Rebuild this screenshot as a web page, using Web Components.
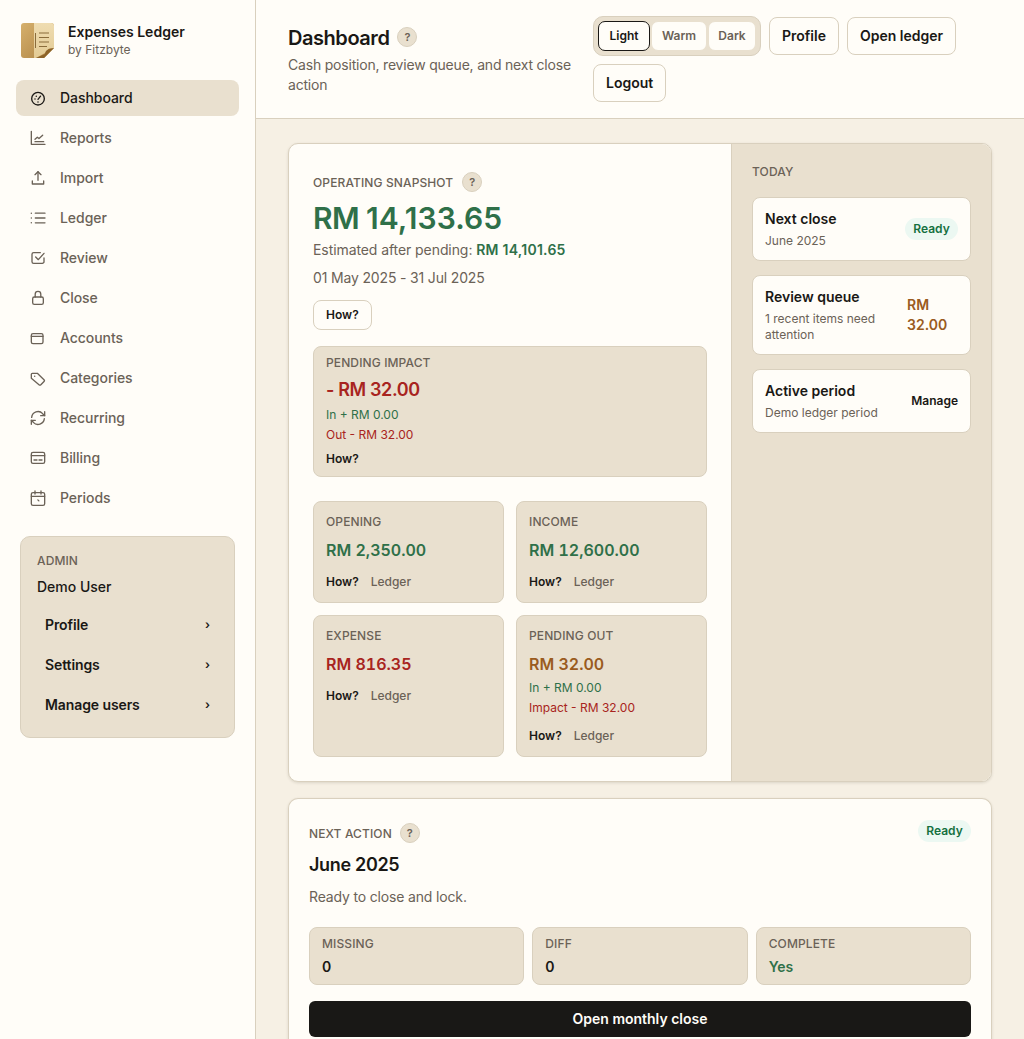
<!doctype html>
<html lang="en"><head><meta charset="utf-8"><title>Expenses Ledger</title>
<style>
html,body{margin:0;height:100%;overflow:hidden;background:#f6f0e4}
body{font-family:Inter,"Liberation Sans",sans-serif;color:#1a1815;font-size:14px}
</style></head>
<body>
<app-shell>
  <side-bar slot="side">
    <nav-item icon="dashboard" active>Dashboard</nav-item>
    <nav-item icon="reports">Reports</nav-item>
    <nav-item icon="import">Import</nav-item>
    <nav-item icon="ledger">Ledger</nav-item>
    <nav-item icon="review">Review</nav-item>
    <nav-item icon="close">Close</nav-item>
    <nav-item icon="accounts">Accounts</nav-item>
    <nav-item icon="categories">Categories</nav-item>
    <nav-item icon="recurring">Recurring</nav-item>
    <nav-item icon="billing">Billing</nav-item>
    <nav-item icon="periods">Periods</nav-item>
    <admin-card slot="footer">
      <admin-link>Profile</admin-link>
      <admin-link>Settings</admin-link>
      <admin-link>Manage users</admin-link>
    </admin-card>
  </side-bar>
  <page-header slot="head"></page-header>
  <snapshot-card></snapshot-card>
  <next-action-card></next-action-card>
</app-shell>
<script>
const BASE = `:host,*{box-sizing:border-box}`;
function def(name, css, html){
  customElements.define(name, class extends HTMLElement{
    constructor(){super();const r=this.attachShadow({mode:'open'});
      r.innerHTML=`<style>${BASE}${css}</style>${typeof html==='function'?html(this):html}`;}
  });
}
const ICONS={
 dashboard:'<circle cx="12" cy="13" r="9.500"/><path d="M12 14l3.800-4.800"/><path d="M7.500 13.400h.01M9.400 9.400h.01M12 18h.01" stroke-width="2.200"/>',
 reports:'<path d="M2 2v19.500h20.500"/><path d="M7.500 14l3.500-3.200 2.500 2 5.500-5"/><path d="M7.500 17.500h13"/>',
 import:'<path d="M12 15.500V2.500"/><path d="M7.500 7L12 2.500 16.500 7"/><path d="M3.500 16.500v4.500h17v-4.500"/>',
 ledger:'<path d="M8 4.750H22.500M8 12H22.500M8 19.250H22.500"/><path d="M2 4.750h.01M2 12h.01M2 19.250h.01" stroke-width="2.200"/>',
 review:'<path d="M15.500 4H5.500A2.500 2.500 0 0 0 3 6.500v11A2.500 2.500 0 0 0 5.500 20h13a2.500 2.500 0 0 0 2.500-2.500V12"/><path d="M8.500 10.500l4 4 8.500-9.500"/>',
 close:'<rect x="4" y="10.500" width="16" height="11" rx="2.500"/><path d="M7.800 10.500V6.200a4.200 4.200 0 0 1 8.400 0v4.300"/>',
 accounts:'<rect x="2" y="5.500" width="17.500" height="15" rx="2.500"/><path d="M2 9.500h17.500"/>',
 categories:'<path d="M2 6.500A1.500 1.500 0 0 1 3.500 5h7.500l10 9.500a2 2 0 0 1 0 2.800l-4.700 4.700a2 2 0 0 1-2.800 0L2 12.500z"/><path d="M7 9.500h.01" stroke-width="2.200"/>',
 recurring:'<path d="M2.500 11A9.500 9.500 0 0 1 19 5.500l3 3"/><path d="M22 2.500v6h-6"/><path d="M21.500 13A9.500 9.500 0 0 1 5 18.500l-3-3"/><path d="M2 21.500v-6h6"/>',
 billing:'<rect x="2" y="3.500" width="20" height="16.500" rx="2.500"/><path d="M2 8.500h20"/><path d="M6 15h4.500M13.500 15H18"/>',
 periods:'<rect x="2" y="4" width="20" height="19" rx="2.500"/><path d="M2 9.500h20M7.500 1.500v4.500M16.500 1.500v4.500"/><path d="M11.800 14.800l1.500 1.500" stroke-width="2"/>'
};
const help=`<help-dot></help-dot>`;
const TAN='#e9e0cf', LINE='#d9d0be', PAPER='#fffdf8', INK='#1a1815', MUTED='#6b6257';

def('app-shell',`:host{display:grid;grid-template-columns:256px 1fr;height:1039px;overflow:hidden;background:#f6f0e4}
 main{min-width:0;display:flex;flex-direction:column;overflow:hidden}
 .content{flex:none;padding:24px 32px;display:flex;flex-direction:column;gap:16px}`,
 `<slot name="side"></slot><main><slot name="head"></slot><div class="content"><slot></slot></div></main>`);

def('brand-mark',`:host{display:block;width:33px;height:35px}svg{display:block}`,
 `<svg width="33" height="35" viewBox="0 0 33 35"><defs>
 <linearGradient id="a" x1="0" y1="0" x2="1" y2="1"><stop offset="0" stop-color="#d6b06c"/><stop offset="1" stop-color="#ad8344"/></linearGradient>
 <linearGradient id="b" x1="0" y1="0" x2="0" y2="1"><stop offset="0" stop-color="#efdcb1"/><stop offset="1" stop-color="#e3cb94"/></linearGradient></defs>
 <path d="M3 0H30a3 3 0 0 1 3 3V25L23 35H3a3 3 0 0 1-3-3V3a3 3 0 0 1 3-3z" fill="url(#a)"/>
 <path d="M13 0H30a3 3 0 0 1 3 3V25L15 35H13z" fill="url(#b)"/>
 <path d="M14.500 10v15" stroke="#8a6c3b" stroke-width="1" fill="none"/>
 <path d="M18 10h10M18 14.500h10M18 19h10M18 23.500h8" stroke="#8a6c3b" stroke-width="1.100" fill="none"/>
 <path d="M33 25c-6 0-9 3-9 6l-9 4h8z" fill="#8d6328"/></svg>`);

def('side-bar',`:host{display:flex;flex-direction:column;height:1039px;background:${PAPER};border-right:1px solid ${LINE};padding:22px 16px 16px}
 .brand{display:flex;align-items:center;gap:14px;padding:0 5px;height:36px;margin-bottom:22px}
 .t{font-weight:600;font-size:14px;line-height:18px;color:${INK}}
 .s{font-size:12px;line-height:16px;color:${MUTED};margin-top:1px}
 nav{display:flex;flex-direction:column;gap:4px}
 .foot{margin:20px 4px 0}`,
 `<div class="brand"><brand-mark></brand-mark><div><div class="t">Expenses Ledger</div><div class="s">by Fitzbyte</div></div></div>
  <nav><slot></slot></nav><div class="foot"><slot name="footer"></slot></div>`);

def('nav-item',`:host{display:flex;align-items:center;gap:14px;height:36px;padding:0 14px 2px;border-radius:8px;color:${MUTED};font-weight:500;font-size:14px;letter-spacing:-.05px}
 :host([active]){background:${TAN};color:${INK}}
 svg{width:16px;height:16px;margin-top:2px;flex:none;fill:none;stroke:currentColor;stroke-width:2;stroke-linecap:round;stroke-linejoin:round}`,
 el=>`<svg viewBox="0 0 24 24">${ICONS[el.getAttribute('icon')]||''}</svg><slot></slot>`);

def('admin-card',`:host{display:block;background:${TAN};border:1px solid ${LINE};border-radius:10px;padding:16px 16px 14px}
 .l{font-size:12px;line-height:16px;font-weight:500;color:${MUTED};letter-spacing:.12px}
 .n{font-size:14px;line-height:20px;font-weight:500;margin:8px 0 10px;color:${INK}}
 .r{display:flex;flex-direction:column;gap:4px}`,
 `<div class="l">ADMIN</div><div class="n">Demo User</div><div class="r"><slot></slot></div>`);

def('admin-link',`:host{display:flex;justify-content:space-between;align-items:center;height:36px;padding:0 8px 2px;font-weight:600;font-size:14px;color:${INK};letter-spacing:-.1px}
 span{font-size:12px}`,`<slot></slot><span>›</span>`);

def('help-dot',`:host{display:inline-flex;align-items:center;justify-content:center;width:20px;height:20px;border-radius:50%;background:${TAN};border:1px solid ${LINE};font-size:11px;font-weight:600;color:${MUTED};flex:none;letter-spacing:0}`,`?`);

def('ui-button',`:host{display:inline-flex;align-items:center;justify-content:center;height:38px;padding:0 12px 2px;background:${PAPER};border:1px solid ${LINE};border-radius:8px;font-weight:600;font-size:14px;color:${INK}}
 :host([small]){height:30px;font-size:12px}`,`<slot></slot>`);

def('seg-switch',`:host{display:inline-flex;align-items:center;height:40px;padding:4px;gap:1px;background:${TAN};border:1px solid ${LINE};border-radius:10px}`,`<slot></slot>`);
def('seg-option',`:host{display:inline-flex;align-items:center;justify-content:center;height:30px;padding:0 0 2px;border-radius:7px;background:${PAPER};border:1px solid ${TAN};font-size:12px;font-weight:600;color:${MUTED}}
 :host([on]){border-color:${INK};color:${INK}}`,`<slot></slot>`);

def('page-header',`:host{display:flex;flex:none;gap:16px;height:119px;background:${PAPER};border-bottom:1px solid ${LINE};padding:16px 32px}
 .tt{flex:0 0 289px;padding-top:6px}
 .h{display:flex;align-items:center;gap:8px;height:30px}
 h1{margin:2px 0 0;font-size:20px;font-weight:600;line-height:30px;color:${INK};letter-spacing:-.45px}
 p{margin:3px 0 0;font-size:14px;line-height:20px;color:${MUTED};letter-spacing:-.2px}
 .a{flex:1;display:flex;flex-wrap:wrap;gap:8px;align-items:center;align-content:flex-start}`,
 `<div class="tt"><div class="h"><h1>Dashboard</h1>${help}</div><p>Cash position, review queue, and next close action</p></div>
 <div class="a"><seg-switch><seg-option on style="width:52px">Light</seg-option><seg-option style="width:56px">Warm</seg-option><seg-option style="width:48px">Dark</seg-option></seg-switch>
 <ui-button>Profile</ui-button><ui-button>Open ledger</ui-button><ui-button>Logout</ui-button></div>`);

def('stat-box',`:host{display:block;background:${TAN};border:1px solid ${LINE};border-radius:8px;padding:12px;font-size:12px}
 ::slotted(.lab){font-size:12px;line-height:16px;font-weight:500;color:${MUTED};letter-spacing:.12px}`,`<slot></slot>`);

def('link-row',`:host{display:flex;gap:12px;font-size:12px;line-height:16px;font-weight:500;color:${MUTED}}
 ::slotted(b){font-weight:600;color:${INK}}`,`<slot></slot>`);

def('today-row',`:host{display:flex;align-items:center;gap:12px;background:${PAPER};border:1px solid ${LINE};border-radius:8px;padding:11px 12px}
 .x{flex:1;min-width:0}
 .t{font-size:14px;line-height:20px;font-weight:600;color:${INK};margin-bottom:4px}
 .d{font-size:12px;line-height:16px;color:${MUTED}}`,
 el=>`<div class="x"><div class="t">${el.getAttribute('t')}</div><div class="d">${el.getAttribute('d')}</div></div><slot></slot>`);

def('status-pill',`:host{display:inline-flex;align-items:center;justify-content:center;width:53px;height:22px;padding-bottom:1px;border-radius:999px;background:#ecf8f2;color:#15703f;font-size:12px;font-weight:600;flex:none}`,`<slot></slot>`);

const V=(c,s,t,mt=0,ex='font-variant-numeric:tabular-nums')=>`<div style="color:${c};font-size:${s}px;font-weight:600;line-height:24px;margin-top:${mt}px;${ex}">${t}</div>`;
const S=(c,t)=>`<div style="color:${c};font-size:12px;line-height:20px">${t}</div>`;
const GR='#2f7049',RD='#a82420',AM='#9a5b20';

def('snapshot-card',`:host{display:grid;grid-template-columns:1fr 260px;height:639px;background:${PAPER};border:1px solid ${LINE};border-radius:10px;box-shadow:0 1px 3px rgba(60,50,30,.14);overflow:hidden}
 .l{padding:28px 24px 24px;min-width:0}
 .k{display:flex;align-items:center;gap:9px;height:20px;font-size:12px;font-weight:500;letter-spacing:.12px;color:${MUTED}}
 .amt{font-size:30px;font-weight:600;line-height:36px;color:${GR};margin-top:8px;letter-spacing:.07px}
 .amt span{letter-spacing:-.6px}
 .e{font-size:14px;line-height:20px;color:${MUTED};margin-top:4px;letter-spacing:-.08px}.e b{color:${GR};font-weight:600;letter-spacing:.25px}
 .dt{font-size:14px;line-height:20px;color:${MUTED};margin-top:8px;letter-spacing:-.16px}
 .how{margin-top:12px;display:flex;width:max-content}
 .pi{margin-top:16px;height:131px}
 .g{display:grid;grid-template-columns:1fr 1fr;gap:12px;margin-top:24px}
 .g>stat-box:nth-child(-n+2){height:102px}
 .g>stat-box:nth-child(n+3){height:142px}
 .r{background:${TAN};border-left:1px solid ${LINE};padding:20px}
 .td{font-size:12px;line-height:16px;font-weight:500;letter-spacing:.12px;color:${MUTED};margin:0 0 17px}
 .rows{display:flex;flex-direction:column;gap:14px}
 .am{flex:0 0 51px;color:${AM};font-size:14px;font-weight:600;line-height:20px}
 .mg{font-size:12px;font-weight:600;color:${INK};padding-bottom:2px}`,
 `<div class="l">
  <div class="k">OPERATING SNAPSHOT ${help}</div>
  <div class="amt"><span>RM </span>14,133.65</div>
  <div class="e">Estimated after pending: <b>RM 14,101.65</b></div>
  <div class="dt">01 May 2025 - 31 Jul 2025</div>
  <ui-button small class="how">How?</ui-button>
  <stat-box class="pi"><div class="lab" style="margin-top:-4px">PENDING IMPACT</div>
    ${V(RD,18,'- RM 32.00',7,'letter-spacing:-.02em')}<div style="height:3px"></div>${S(GR,'In + RM 0.00')}${S(RD,'Out - RM 32.00')}
    <link-row style="margin-top:6px"><b>How?</b></link-row></stat-box>
  <div class="g">
   <stat-box><div class="lab">OPENING</div>${V(GR,16,'RM 2,350.00',8)}<link-row style="margin-top:12px"><b>How?</b>Ledger</link-row></stat-box>
   <stat-box><div class="lab">INCOME</div>${V(GR,16,'RM 12,600.00',8)}<link-row style="margin-top:12px"><b>How?</b>Ledger</link-row></stat-box>
   <stat-box><div class="lab">EXPENSE</div>${V(RD,16,'RM 816.35',8)}<link-row style="margin-top:12px"><b>How?</b>Ledger</link-row></stat-box>
   <stat-box><div class="lab">PENDING OUT</div>${V(AM,16,'RM 32.00',8)}<div style="height:2px"></div>${S(GR,'In + RM 0.00')}${S(RD,'Impact - RM 32.00')}<link-row style="margin-top:10px"><b>How?</b>Ledger</link-row></stat-box>
  </div></div>
  <aside class="r"><div class="td">TODAY</div><div class="rows">
   <today-row t="Next close" d="June 2025"><status-pill>Ready</status-pill></today-row>
   <today-row t="Review queue" d="1 recent items need attention"><div class="am">RM 32.00</div></today-row>
   <today-row t="Active period" d="Demo ledger period"><div class="mg">Manage</div></today-row>
  </div></aside>`);

def('next-action-card',`:host{display:block;background:${PAPER};border:1px solid ${LINE};border-bottom:0;border-radius:10px 10px 0 0;padding:20px;box-shadow:0 1px 3px rgba(60,50,30,.14);min-height:300px}
 .top{display:flex;justify-content:space-between;align-items:flex-start;height:24px}
 .top status-pill{margin-top:1px}
 .k{display:flex;align-items:center;gap:8px;height:20px;margin-top:4px;font-size:12px;font-weight:500;letter-spacing:.12px;color:${MUTED}}
 h2{margin:8px 0 0;font-size:18px;line-height:28px;font-weight:600;color:${INK};letter-spacing:-.33px}
 p{margin:8px 0 0;font-size:14px;line-height:20px;color:${MUTED};letter-spacing:-.16px}
 .g{display:grid;grid-template-columns:1fr 1fr 1fr;gap:8px;margin-top:20px}
 .g stat-box{height:58px;padding:8px 12px}
 .v{font-size:14px;line-height:20px;font-weight:600;margin-top:5px;color:${INK}}
 .btn{display:flex;align-items:center;justify-content:center;height:36px;padding-bottom:2px;margin-top:16px;background:#191816;color:${PAPER};border-radius:6px;font-size:14px;font-weight:600}`,
 `<div class="top"><div class="k">NEXT ACTION ${help}</div><status-pill>Ready</status-pill></div>
  <h2>June 2025</h2><p>Ready to close and lock.</p>
  <div class="g"><stat-box><div class="lab">MISSING</div><div class="v">0</div></stat-box>
  <stat-box><div class="lab">DIFF</div><div class="v">0</div></stat-box>
  <stat-box><div class="lab">COMPLETE</div><div class="v" style="color:${GR}">Yes</div></stat-box></div>
  <div class="btn">Open monthly close</div>`);
</script>
</body></html>
